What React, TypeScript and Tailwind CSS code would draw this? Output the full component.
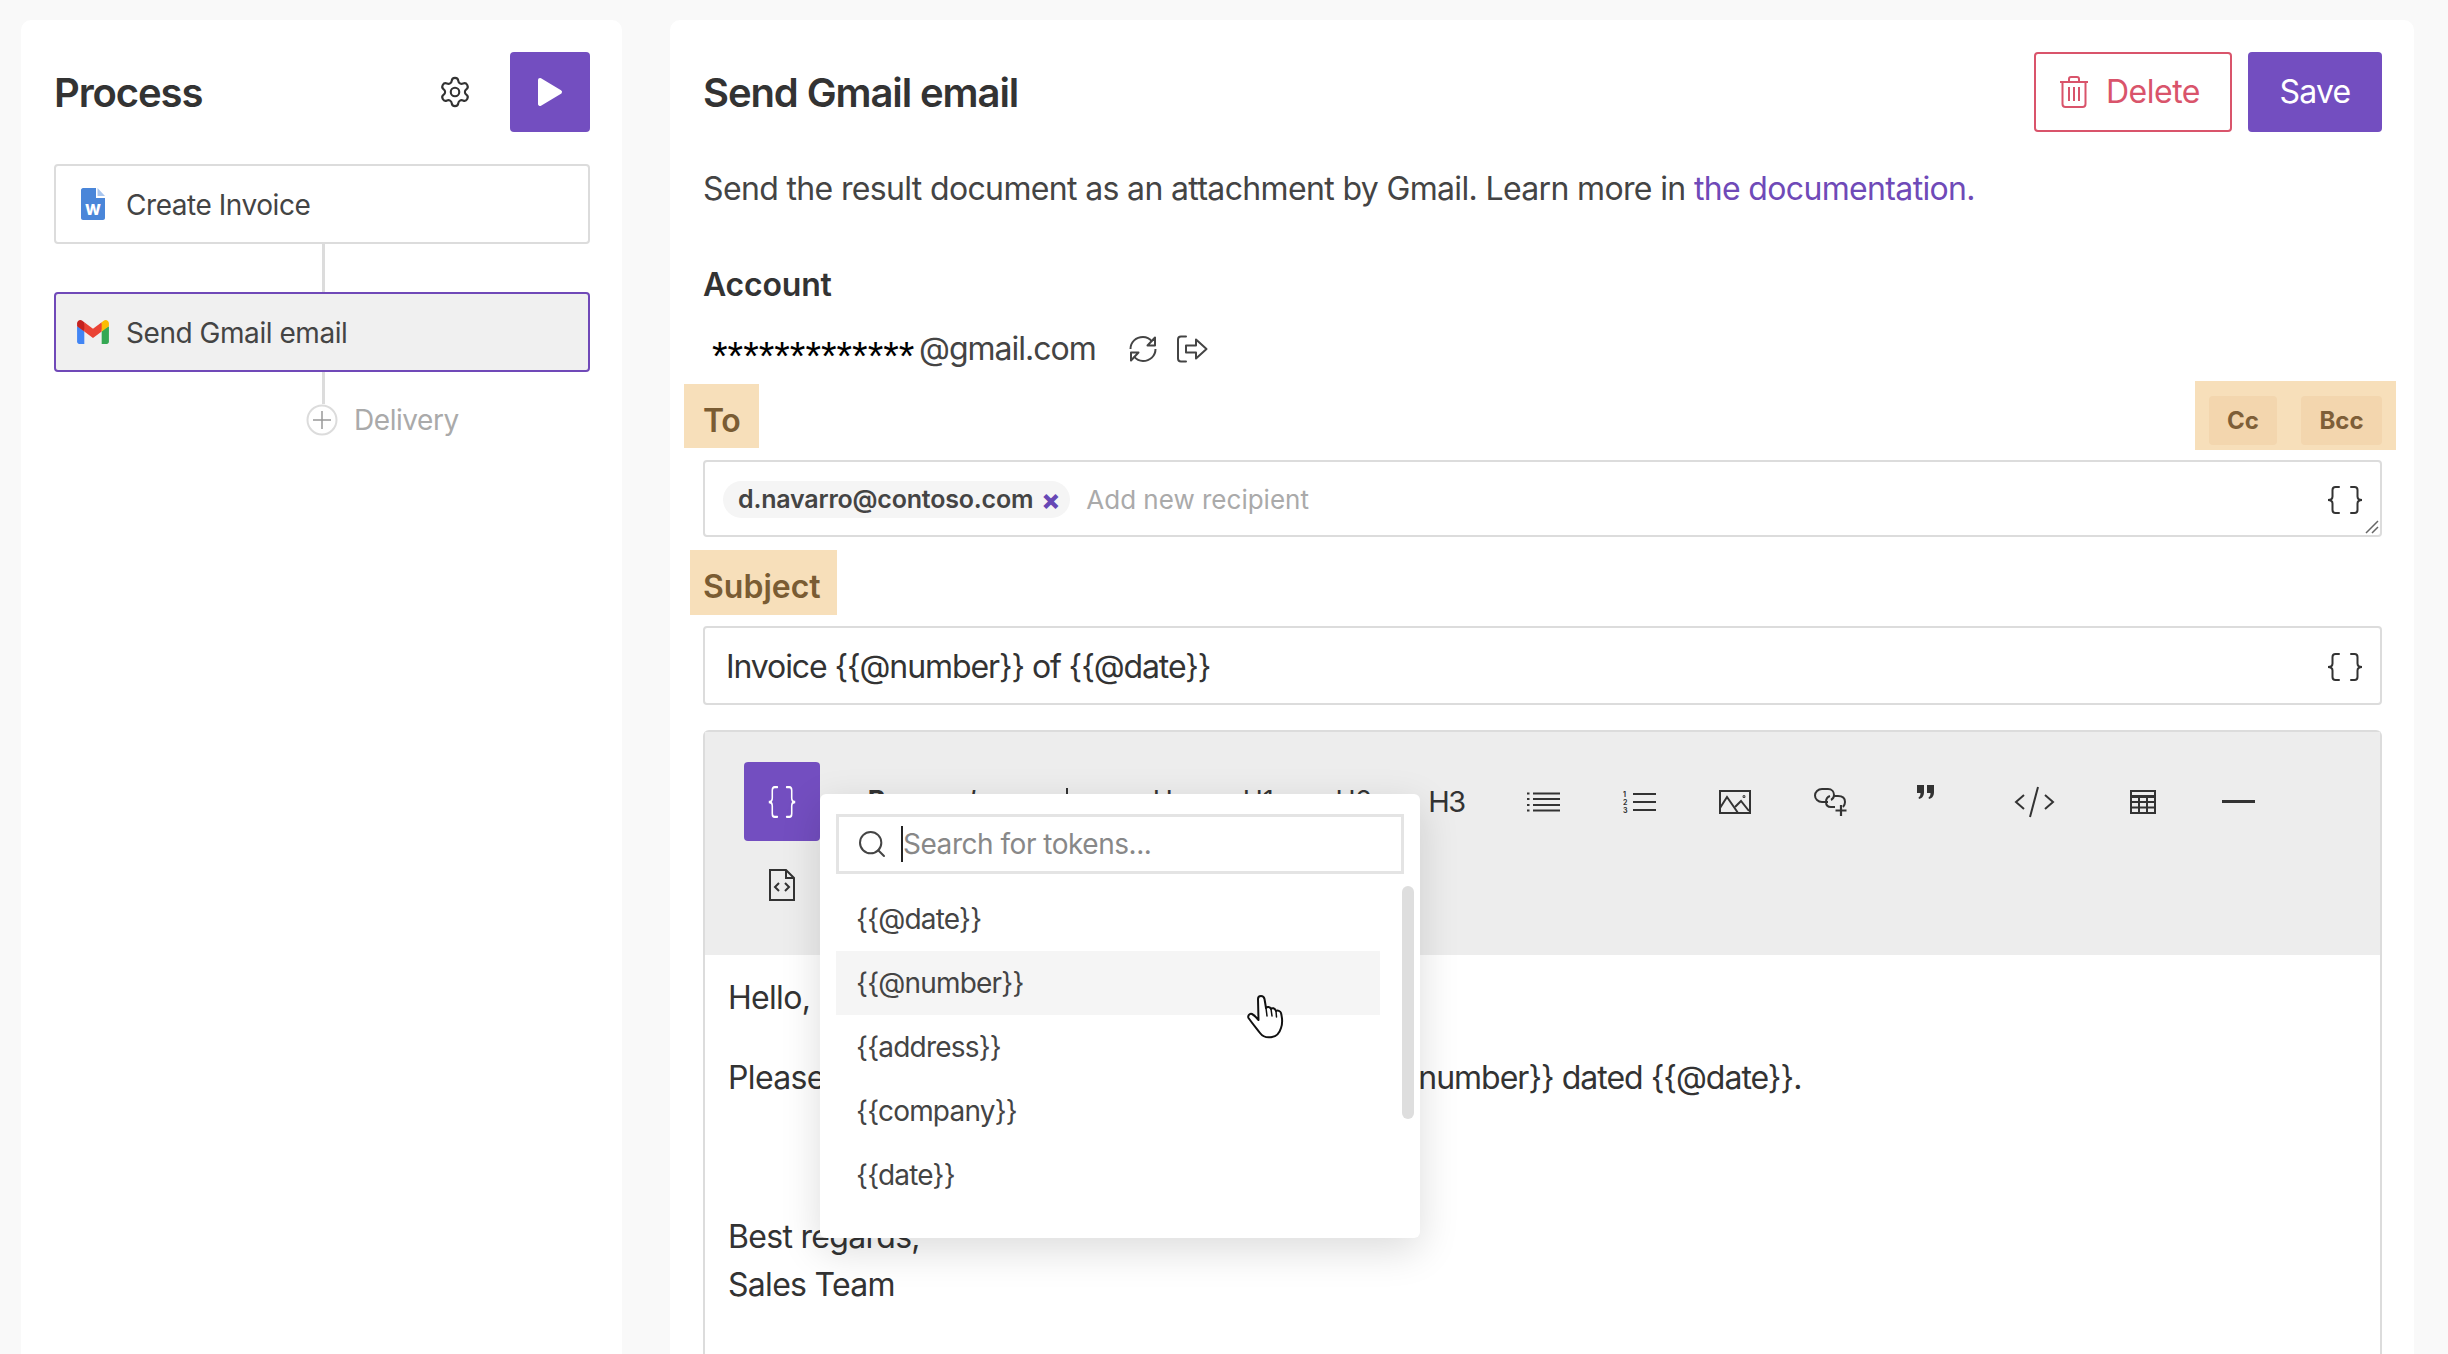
import React from "react";
import { Settings, Search } from "lucide-react";

function Braces({ className = "w-[36px] h-[28px] text-[#333]" }: { className?: string }) {
  return (
    <svg viewBox="0 0 36 28" preserveAspectRatio="none" className={className} fill="none" stroke="currentColor" strokeWidth="2" strokeLinecap="round">
      <path d="M12 1H8.500C6.500 1 5.500 2 5.500 4V10.500C5.500 12.500 4 14 1 14C4 14 5.500 15.500 5.500 17.500V24C5.500 26 6.500 27 8.500 27H12" />
      <path d="M24 1H27.500C29.500 1 30.500 2 30.500 4V10.500C30.500 12.500 32 14 35 14C32 14 30.500 15.500 30.500 17.500V24C30.500 26 29.500 27 27.500 27H24" />
    </svg>
  );
}

function WordIcon() {
  return (
    <svg viewBox="0 0 24 32" className="w-[24px] h-[32px] shrink-0">
      <path d="M2 0H15V10H24V30C24 31 23 32 22 32H2C1 32 0 31 0 30V2C0 1 1 0 2 0Z" fill="#4a86d9" />
      <path d="M16.500 0L24 8H16.500Z" fill="#a9c6ef" />
      <text x="12" y="27" textAnchor="middle" fontSize="15" fontWeight="800" fill="#fff" fontFamily="Inter, sans-serif">W</text>
    </svg>
  );
}

function GmailIcon() {
  return (
    <svg viewBox="0 0 256 193" className="w-[32px] h-[24px] shrink-0">
      <path fill="#4285F4" d="M58.182 192.050V93.140L27.507 65.077 0 49.504v125.091c0 9.658 7.825 17.455 17.455 17.455h40.727Z" />
      <path fill="#34A853" d="M197.818 192.050h40.727c9.659 0 17.455-7.826 17.455-17.455V49.505l-31.156 17.837-27.026 25.798v98.910Z" />
      <path fill="#EA4335" d="m58.182 93.140-4.174-38.647 4.174-36.989L128 69.868l69.818-52.364 4.669 34.992-4.669 40.644L128 145.504z" />
      <path fill="#FBBC04" d="M197.818 17.504V93.140L256 49.504V26.231c0-21.585-24.640-33.890-41.890-20.945l-16.292 12.218Z" />
      <path fill="#C5221F" d="m0 49.504 26.759 20.070L58.182 93.140V17.504L41.890 5.286C24.610-7.660 0 4.646 0 26.230v23.273Z" />
    </svg>
  );
}

function PlayIcon() {
  return (
    <svg viewBox="0 0 26 30" className="w-[26px] h-[30px]">
      <path d="M3 3L23 15L3 27Z" fill="#fff" stroke="#fff" strokeWidth="4" strokeLinejoin="round" />
    </svg>
  );
}

function PlusCircle() {
  return (
    <svg viewBox="0 0 32 32" className="w-[32px] h-[32px] shrink-0" fill="none">
      <circle cx="16" cy="16" r="14.500" stroke="#dcdcdc" strokeWidth="2" />
      <path d="M16 7V25M7 16H25" stroke="#999" strokeWidth="1.500" />
    </svg>
  );
}

function TrashIcon() {
  return (
    <svg viewBox="0 0 28 32" className="w-[28px] h-[32px]" fill="none" stroke="currentColor" strokeWidth="2">
      <path d="M0 6H28" />
      <path d="M9 6V3C9 2 10 1 11 1H17C18 1 19 2 19 3V6" />
      <path d="M2.500 6V28C2.500 30 3.500 31 5.500 31H22.500C24.500 31 25.500 30 25.500 28V6" />
      <path d="M9 11V25M14 11V25M19 11V25" />
    </svg>
  );
}

function RefreshIcon() {
  return (
    <svg viewBox="0 0 30 28" className="w-[30px] h-[28px]" fill="none" stroke="#444" strokeWidth="2">
      <path d="M2.500 14C2.500 7 8 2 15 2C19 2 22 4 24 6.500" />
      <path d="M27.500 14C27.500 21 22 26 15 26C11 26 8 24 6 21.500" />
      <path d="M27 2.500V10.500H19.500Z" strokeLinejoin="round" />
      <path d="M3 25.500V17.500H10.500Z" strokeLinejoin="round" />
    </svg>
  );
}

function ExportIcon() {
  return (
    <svg viewBox="0 0 32 28" className="w-[32px] h-[28px]" fill="none" stroke="#444" strokeWidth="2" strokeLinejoin="round">
      <path d="M10 1.500H5C3 1.500 2 2.500 2 4.500V23.500C2 25.500 3 26.500 5 26.500H10" strokeLinecap="round" />
      <path d="M10 10.500H20V4.500L30.500 14L20 23.500V17.500H10Z" />
    </svg>
  );
}

function ListIcon() {
  return (
    <svg viewBox="0 0 34 21" className="w-[34px] h-[21px]" fill="none" stroke="#333" strokeWidth="2">
      <path d="M6 2.500H33M6 8H33M6 14H33M6 19.500H33" />
      <path d="M0 2.500H2.500M0 8H2.500M0 14H2.500M0 19.500H2.500" />
    </svg>
  );
}

function NumListIcon() {
  return (
    <svg viewBox="0 0 34 22" className="w-[34px] h-[22px]" fill="none" stroke="#333">
      <path d="M10 3H33M10 11H33M10 19H33" strokeWidth="2" />
      <text x="0" y="6" fontSize="7" fontWeight="700" fill="#333" stroke="none" fontFamily="Inter, sans-serif">1</text>
      <text x="0" y="14" fontSize="7" fontWeight="700" fill="#333" stroke="none" fontFamily="Inter, sans-serif">2</text>
      <text x="0" y="22" fontSize="7" fontWeight="700" fill="#333" stroke="none" fontFamily="Inter, sans-serif">3</text>
    </svg>
  );
}

function ImageIcon() {
  return (
    <svg viewBox="0 0 32 24" className="w-[32px] h-[24px]" fill="none" stroke="#333" strokeWidth="2">
      <rect x="1" y="1" width="30" height="22" />
      <path d="M1 18L8 7L17 20L19 23" />
      <path d="M16 17L22 11L30 21" />
      <circle cx="25" cy="6.500" r="0.500" />
    </svg>
  );
}

function LinkPlusIcon() {
  return (
    <svg viewBox="0 0 34 28" className="w-[34px] h-[28px]" fill="none" stroke="#333" strokeWidth="2">
      <path d="M14 14H8C4 14 1 11 1 7.500C1 4 4 1 8 1H14C18 1 20 4 20 7C20 9 19 11 17 12" />
      <path d="M20 7H24C28 7 31 9 31 13C31 15 30 17 29 18" transform="translate(0 1)" />
      <path d="M16 8C13 9 12 11 12 14C12 17 14 19 17 19H21" />
      <path d="M27 17V28M21.500 22.500H32.500" strokeWidth="2.200" />
    </svg>
  );
}

function QuoteIcon() {
  return (
    <svg viewBox="0 0 17 14" className="w-[17px] h-[14px]" fill="#333">
      <path d="M0 0H7V7C7 10 6 13 2 14L1.500 12.500C3 11.500 3.500 10 3.500 8H0Z" />
      <path d="M10 0H17V7C17 10 16 13 12 14L11.500 12.500C13 11.500 13.500 10 13.500 8H10Z" />
    </svg>
  );
}

function CodeIcon() {
  return (
    <svg viewBox="0 0 41 32" className="w-[41px] h-[32px]" fill="none" stroke="#333" strokeWidth="2">
      <path d="M10 9L2 16L10 23M31 9L39 16L31 23M24 1L16 31" />
    </svg>
  );
}

function TableIcon() {
  return (
    <svg viewBox="0 0 26 24" className="w-[26px] h-[24px]" fill="none" stroke="#333" strokeWidth="2">
      <rect x="1" y="1" width="24" height="22" />
      <path d="M1 6.500H25" strokeWidth="3" />
      <path d="M1 12H25M1 17.500H25M9 6.500V23M17 6.500V23" />
    </svg>
  );
}

function FileCodeIcon() {
  return (
    <svg viewBox="0 0 26 32" className="w-[26px] h-[32px]" fill="none" stroke="#333" strokeWidth="2">
      <path d="M1 1H17L25 9V31H1Z" />
      <path d="M17 1V9H25" />
      <path d="M10 14L6 18L10 22M16 14L20 18L16 22" />
    </svg>
  );
}

function HandCursor() {
  return (
    <svg viewBox="0 0 37 44" className="w-[37px] h-[44px]" fill="#fff" stroke="#111" strokeWidth="2" strokeLinejoin="round" strokeLinecap="round">
      <path d="M11 4C11 2 12 1 14 1C16 1 17 2 17.500 4L19 13C20 11.500 23 11.500 24 14C25 12.500 28 13 29 16C30.500 15 33.500 16 34 18C35.500 24 35.500 29 34 33C32.500 38 29 41.500 25 42C20 43 16 42 13 38C10 34 5 28 1.500 23C0.500 21 2.500 18 5 19C7 20 9 22 11.500 25Z" />
      <path d="M19 13L20 21M24 14L25 21M29 16L29.500 22" fill="none" strokeWidth="1.500" />
    </svg>
  );
}

function Step({ icon, label, active }: { icon: React.ReactNode; label: string; active?: boolean }) {
  return (
    <div
      className={
        active
          ? "h-[80px] flex items-center border-2 border-[#7049b8] rounded-[4px] bg-[#f0f0f0]"
          : "h-[80px] flex items-center border-2 border-[#dcdcdc] rounded-[4px] bg-white"
      }
    >
      <div className="w-[32px] ml-[21px] mr-[17px] flex justify-center shrink-0">{icon}</div>
      <span className="text-[28px] tracking-[-0.450px] text-[#444] pt-[2px]">{label}</span>
    </div>
  );
}

function Tool({ children, className = "w-[95.400px]" }: { children?: React.ReactNode; className?: string }) {
  return <div className={`h-[79px] flex items-center justify-center shrink-0 ${className}`}>{children}</div>;
}

const tokens = ["{{@date}}", "{{@number}}", "{{address}}", "{{company}}", "{{date}}"];

export default function App() {
  return (
    <div className="h-[1354px] overflow-hidden bg-[#f9f9f9] flex gap-[48px] pl-[21px] pr-[34px] pt-[20px] font-['Inter',sans-serif] text-[#333]">
      <aside className="w-[601px] shrink-0 bg-white rounded-t-[10px] pl-[33px] pr-[32px] pt-[32px]">
        <div className="h-[80px] flex items-center">
          <h2 className="text-[40px] tracking-[-1.100px] font-semibold flex-1 pt-[2px]">Process</h2>
          <Settings className="w-[34px] h-[34px] text-[#333] mr-[38px]" strokeWidth={1.500} />
          <button className="w-[80px] h-[80px] bg-[#734ec0] rounded-[4px] flex items-center justify-center">
            <PlayIcon />
          </button>
        </div>
        <div className="mt-[32px]">
          <Step icon={<WordIcon />} label="Create Invoice" />
          <div className="w-[3px] h-[48px] bg-[#dcdcdc] ml-[268px]" />
          <Step icon={<GmailIcon />} label="Send Gmail email" active />
          <div className="w-[3px] h-[32px] bg-[#dcdcdc] ml-[268px]" />
          <div className="h-[32px] flex items-center pl-[252px] gap-[16px]">
            <PlusCircle />
            <span className="text-[28px] tracking-[-0.450px] text-[#aaa]">Delivery</span>
          </div>
        </div>
      </aside>

      <main className="flex-1 bg-white rounded-t-[10px] pl-[33px] pr-[32px] pt-[32px]">
        <div className="h-[80px] flex items-center">
          <h1 className="text-[40px] tracking-[-1.100px] font-semibold flex-1 pt-[2px]">Send Gmail email</h1>
          <button className="h-[80px] w-[198px] border-2 border-[#d9546b] rounded-[4px] flex items-center pl-[24px] gap-[18px] text-[#d9546b] text-[32px] tracking-[-0.500px]">
            <TrashIcon />
            Delete
          </button>
          <button className="h-[80px] w-[134px] ml-[16px] bg-[#734ec0] rounded-[4px] text-white text-[32px] tracking-[-0.800px]">Save</button>
        </div>

        <p className="mt-[37px] text-[32px] tracking-[-0.650px] leading-[40px] text-[#444]">
          Send the result document as an attachment by Gmail. Learn more in <span className="text-[#6f4ab8]">the documentation.</span>
        </p>

        <div className="mt-[56px] text-[32px] tracking-[-0.200px] leading-[40px] font-semibold">Account</div>
        <div className="mt-[24px] h-[40px] flex items-center pl-[9px]">
          <span className="font-['Liberation_Sans',sans-serif] text-[40px] leading-[40px] text-black w-[207px] translate-y-[7px] shrink-0">*************</span>
          <span className="text-[32px] tracking-[-1px] text-[#444]">@gmail.com</span>
          <div className="ml-[32px] flex items-center gap-[18px]">
            <RefreshIcon />
            <ExportIcon />
          </div>
        </div>

        <div className="mt-[12px] h-[69px] flex items-center justify-between -ml-[19px] -mr-[14px]">
          <div className="h-[64px] w-[75px] bg-[#f7dfba] flex items-center pl-[19px] pt-[10px] text-[32px] tracking-[-0.500px] font-semibold text-[#7a5c33]">To</div>
          <div className="h-[69px] w-[201px] bg-[#f7dfba] flex items-center pl-[14px] pt-[10px] gap-[24px] text-[24px] font-bold text-[#7e5f38]">
            <span className="w-[68px] h-[49px] bg-[#f3d6ae] rounded-[4px] flex items-center justify-center">Cc</span>
            <span className="w-[81px] h-[49px] bg-[#f3d6ae] rounded-[4px] flex items-center justify-center">Bcc</span>
          </div>
        </div>

        <div className="mt-[10px] h-[77px] border-2 border-[#dcdcdc] rounded-[4px] flex items-center pl-[18px] pr-[17px] pt-[2px] relative">
          <div className="h-[37px] bg-[#f5f5f5] rounded-full flex items-center pl-[15px] pr-[10px] text-[25px] tracking-[-0.200px] font-semibold text-[#444] shrink-0">
            d.navarro@contoso.com
            <span className="ml-[8px] text-[#6748b5] font-extrabold text-[28px] leading-[32px]">×</span>
          </div>
          <span className="ml-[16px] text-[26px] text-[#aaa] flex-1">Add new recipient</span>
          <Braces />
          <svg viewBox="0 0 14 14" className="absolute right-[1px] bottom-[1px] w-[14px] h-[14px]" stroke="#666" strokeWidth="1.500">
            <path d="M1 13L13 1M7 13L13 7" />
          </svg>
        </div>

        <div className="mt-[13px] h-[65px] w-[147px] -ml-[13px] bg-[#f7dfba] flex items-center pl-[13px] pt-[8px] text-[32px] font-semibold text-[#7a5c33]">Subject</div>

        <div className="mt-[11px] h-[79px] border-2 border-[#dcdcdc] rounded-[4px] flex items-center pl-[21px] pr-[17px] pt-[2px]">
          <span className="text-[32px] tracking-[-1.100px] text-[#333] flex-1">{"Invoice {{@number}} of {{@date}}"}</span>
          <Braces />
        </div>

        <div className="relative mt-[25px] border-2 border-b-0 border-[#dcdcdc] rounded-t-[6px] h-[700px]">
          <div className="h-[223px] bg-[#ededed] pl-[39px] pt-[30px]">
            <div className="flex text-[27px] text-[#333]">
              <Tool className="w-[76px] bg-[#734ec0] rounded-[4px] text-white mr-[9px]">
                <Braces className="w-[28px] h-[32px] text-white" />
              </Tool>
              <Tool><span className="font-bold">B</span></Tool>
              <Tool><span className="italic">I</span></Tool>
              <Tool><span className="w-[2px] h-[28px] bg-[#333]" /></Tool>
              <Tool>U</Tool>
              <Tool>H1</Tool>
              <Tool>H2</Tool>
              <Tool><span className="text-[29px] tracking-[-1.500px] -ml-[5px]">H3</span></Tool>
              <Tool><ListIcon /></Tool>
              <Tool><NumListIcon /></Tool>
              <Tool><ImageIcon /></Tool>
              <Tool><LinkPlusIcon /></Tool>
              <Tool><div className="-mt-[20px]"><QuoteIcon /></div></Tool>
              <Tool className="w-[122px]"><CodeIcon /></Tool>
              <Tool><TableIcon /></Tool>
              <Tool><span className="w-[33px] h-[3px] bg-[#333]" /></Tool>
            </div>
            <div className="w-[76px] h-[88px] flex items-center justify-center">
              <FileCodeIcon />
            </div>
          </div>

          <div className="pl-[23px] pt-[19px] text-[32px] tracking-[-0.700px] leading-[48px] text-[#333]">
            <p>Hello,</p>
            <p className="mt-[32px] tracking-[-0.650px]">
              {"Please find attached a document of invoice {{@"}
              <span className="tracking-[-1px]">{"number}} dated {{@date}}."}</span>
            </p>
            <p className="mt-[111px]">Best regards,</p>
            <p>Sales Team</p>
          </div>

          <div className="absolute left-[115px] top-[62px] w-[600px] h-[444px] bg-white rounded-[6px] shadow-[0_12px_40px_rgba(0,0,0,0.14)]">
            <div className="mx-[16px] mt-[20px] h-[60px] border-[3px] border-[#e4e4e4] flex items-center pl-[17px]">
              <Search className="w-[32px] h-[32px] text-[#444] shrink-0" strokeWidth={1.500} />
              <span className="ml-[13px] w-[2px] h-[36px] bg-[#222]" />
              <span className="text-[28px] tracking-[-0.470px] text-[#888]">Search for tokens...</span>
            </div>
            <div className="mt-[13px]">
              {tokens.map((t) => (
                <div
                  key={t}
                  className={
                    t === "{{@number}}"
                      ? "ml-[16px] w-[544px] h-[64px] flex items-center pl-[20px] text-[28px] tracking-[-0.800px] text-[#444] bg-[#f5f5f5]"
                      : "ml-[16px] w-[544px] h-[64px] flex items-center pl-[20px] text-[28px] tracking-[-0.800px] text-[#444]"
                  }
                >
                  {t}
                </div>
              ))}
            </div>
            <div className="absolute left-[582px] top-[92px] w-[12px] h-[233px] rounded-full bg-[#dedede]" />
            <div className="absolute left-[427px] top-[201px]">
              <HandCursor />
            </div>
          </div>
        </div>
      </main>
    </div>
  );
}
